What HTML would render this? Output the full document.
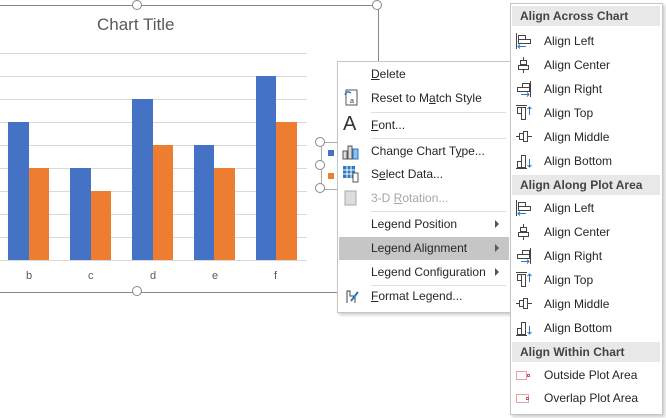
<!DOCTYPE html>
<html><head><style>
body{margin:0;width:666px;height:418px;position:relative;overflow:hidden;background:#fff;font-family:"Liberation Sans",sans-serif;font-size:12px;color:#262626}
.a{position:absolute}
.g{position:absolute;left:0;width:307px;height:1px;background:#d9d9d9}
.b{position:absolute;background:#4472c4}
.o{position:absolute;background:#ed7d31}
.h{position:absolute;width:8px;height:8px;border:1.5px solid #888;border-radius:50%;background:#fff}
.lab{position:absolute;top:270px;color:#595959;font-size:11px}
.mi{position:absolute;left:371px;color:#262626}
.sep{position:absolute;left:371px;width:135px;height:1px;background:#e0e0e0}
.arr{position:absolute;left:495px;width:0;height:0;border-left:4px solid #555;border-top:4px solid transparent;border-bottom:4px solid transparent}
.si{position:absolute;left:544px;color:#262626}
.hd{position:absolute;left:512px;width:148px;height:20px;background:#e8e8e8;font-weight:bold;color:#444;line-height:20px;text-indent:8px}
.ic{position:absolute;left:515px}
</style></head><body>
<div class="a" style="left:0;top:5px;width:378px;height:1px;background:#888"></div>
<div class="a" style="left:378px;top:5px;width:1px;height:56px;background:#888"></div>
<div class="a" style="left:0;top:292px;width:337px;height:1px;background:#888"></div>
<div class="a" style="left:97px;top:15px;font-size:17px;color:#595959">Chart Title</div>
<div class="g" style="top:53px"></div><div class="g" style="top:76px"></div><div class="g" style="top:99px"></div><div class="g" style="top:122px"></div><div class="g" style="top:145px"></div><div class="g" style="top:168px"></div><div class="g" style="top:191px"></div><div class="g" style="top:214px"></div><div class="g" style="top:237px"></div><div class="g" style="top:260px"></div>
<div class="b" style="left:8px;top:122px;width:21px;height:138px"></div><div class="o" style="left:29px;top:168px;width:20px;height:92px"></div>
<div class="b" style="left:70px;top:168px;width:21px;height:92px"></div><div class="o" style="left:91px;top:191px;width:20px;height:69px"></div>
<div class="b" style="left:132px;top:99px;width:21px;height:161px"></div><div class="o" style="left:153px;top:145px;width:20px;height:115px"></div>
<div class="b" style="left:194px;top:145px;width:20px;height:115px"></div><div class="o" style="left:214px;top:168px;width:21px;height:92px"></div>
<div class="b" style="left:256px;top:76px;width:20px;height:184px"></div><div class="o" style="left:276px;top:122px;width:21px;height:138px"></div>
<div class="lab" style="left:26px">b</div><div class="lab" style="left:88px">c</div><div class="lab" style="left:150px">d</div><div class="lab" style="left:212px">e</div><div class="lab" style="left:274px">f</div>
<div class="a" style="left:321px;top:142px;width:16px;height:46px;border:1px solid #aaa;border-right:none"></div>
<div class="a" style="left:328px;top:150px;width:6px;height:6px;background:#4472c4"></div>
<div class="a" style="left:328px;top:173px;width:6px;height:6px;background:#ed7d31"></div>
<div class="h" style="left:132px;top:0px"></div><div class="h" style="left:372px;top:0px"></div><div class="h" style="left:132px;top:286px"></div>
<div class="h" style="left:315px;top:137px"></div><div class="h" style="left:315px;top:160px"></div><div class="h" style="left:315px;top:183px"></div>
<!-- context menu -->
<div class="a" style="left:337px;top:61px;width:172px;height:250px;background:#fff;border:1px solid #c6c6c6;box-shadow:2px 2px 3px rgba(0,0,0,.2)"></div>
<div class="a" style="left:339px;top:237px;width:170px;height:23px;background:#c6c6c6"></div>
<div class="mi" style="top:67px"><u>D</u>elete</div>
<div class="mi" style="top:91px">Reset to M<u>a</u>tch Style</div>
<div class="sep" style="top:112px"></div>
<div class="mi" style="top:118px"><u>F</u>ont...</div>
<div class="sep" style="top:138px"></div>
<div class="mi" style="top:144px">Change Chart T<u>y</u>pe...</div>
<div class="mi" style="top:167px">S<u>e</u>lect Data...</div>
<div class="mi" style="top:191px;color:#a6a6a6">3-D <u>R</u>otation...</div>
<div class="sep" style="top:211px"></div>
<div class="mi" style="top:217px">Legend Position</div><div class="arr" style="top:220px"></div>
<div class="mi" style="top:241px">Legend Alignment</div><div class="arr" style="top:244px"></div>
<div class="mi" style="top:265px">Legend Configuration</div><div class="arr" style="top:268px"></div>
<div class="sep" style="top:285px"></div>
<div class="mi" style="top:289px"><u>F</u>ormat Legend...</div>
<svg class="a" style="left:343px;top:89px" width="16" height="18"><rect x="3" y="1" width="11" height="15" fill="#fff" stroke="#555"/><path d="M2 6 Q4 1 8 4" stroke="#2b79c2" fill="none" stroke-width="1.5"/><text x="7" y="14" font-size="7" fill="#333">a</text></svg>
<div class="a" style="left:343px;top:113px;font-size:20px;color:#333">A</div>
<svg class="a" style="left:342px;top:142px" width="18" height="18"><rect x="1" y="9" width="4" height="8" fill="#ddd" stroke="#555"/><rect x="6" y="4" width="4" height="13" fill="#ddd" stroke="#555"/><rect x="11" y="7" width="5" height="10" fill="#8dc0ea" stroke="#2b79c2"/></svg>
<svg class="a" style="left:342px;top:165px" width="18" height="18"><rect x="1" y="1" width="12" height="12" fill="#2b79c2"/><path d="M1 5H13M1 9H13M5 1V13M9 1V13" stroke="#fff"/><rect x="11" y="8" width="5" height="9" fill="#fff" stroke="#555"/></svg>
<svg class="a" style="left:343px;top:189px" width="16" height="18"><rect x="2" y="2" width="11" height="14" fill="#ddd" stroke="#aaa"/></svg>
<svg class="a" style="left:342px;top:286px" width="18" height="18"><path d="M5 17V5H8V10H13V17" fill="none" stroke="#444"/><path d="M9 15L16 6" stroke="#2b79c2" stroke-width="2"/></svg>
<!-- submenu -->
<div class="a" style="left:510px;top:3px;width:151px;height:410px;background:#fff;border:1px solid #c6c6c6;box-shadow:2px 2px 3px rgba(0,0,0,.2)"></div>
<div class="hd" style="top:6px">Align Across Chart</div>
<div class="hd" style="top:175px">Align Along Plot Area</div>
<div class="hd" style="top:342px">Align Within Chart</div>
<div class="si" style="top:34px">Align Left</div><div class="si" style="top:58px">Align Center</div><div class="si" style="top:82px">Align Right</div><div class="si" style="top:106px">Align Top</div><div class="si" style="top:130px">Align Middle</div><div class="si" style="top:154px">Align Bottom</div>
<div class="si" style="top:201px">Align Left</div><div class="si" style="top:225px">Align Center</div><div class="si" style="top:249px">Align Right</div><div class="si" style="top:273px">Align Top</div><div class="si" style="top:297px">Align Middle</div><div class="si" style="top:321px">Align Bottom</div>
<div class="si" style="top:368px">Outside Plot Area</div><div class="si" style="top:391px">Overlap Plot Area</div>
<svg class="ic" style="top:32px" width="18" height="18"><path d="M1.5 1V17" stroke="#444"/><rect x="3.5" y="3.5" width="7" height="4" fill="none" stroke="#444"/><rect x="3.5" y="7.5" width="12" height="4" fill="none" stroke="#444"/><path d="M3 14.5H11M5 12.5L3 14.5L5 16.5" stroke="#2b79c2" fill="none"/></svg>
<svg class="ic" style="top:56px" width="18" height="18"><path d="M8.5 1V17" stroke="#444"/><rect x="5.5" y="4.5" width="6" height="4" fill="#fff" stroke="#444"/><rect x="3.5" y="9.5" width="10" height="4" fill="#fff" stroke="#444"/></svg>
<svg class="ic" style="top:80px" width="18" height="18"><path d="M15.5 1V17" stroke="#444"/><rect x="7.5" y="3.5" width="7" height="4" fill="none" stroke="#444"/><rect x="2.5" y="7.5" width="12" height="4" fill="none" stroke="#444"/><path d="M6 14.5H14M12 12.5L14 14.5L12 16.5" stroke="#2b79c2" fill="none"/></svg>
<svg class="ic" style="top:104px" width="18" height="18"><path d="M1 1.5H12" stroke="#444"/><rect x="2.5" y="3.5" width="4" height="6" fill="none" stroke="#444"/><rect x="6.5" y="3.5" width="4" height="12" fill="none" stroke="#444"/><path d="M14.5 11V3M12.5 5L14.5 3L16.5 5" stroke="#2b79c2" fill="none"/></svg>
<svg class="ic" style="top:128px" width="18" height="18"><path d="M1 8.5H17" stroke="#444"/><rect x="4.5" y="5.5" width="4" height="6" fill="#fff" stroke="#444"/><rect x="8.5" y="3.5" width="4" height="10" fill="#fff" stroke="#444"/></svg>
<svg class="ic" style="top:152px" width="18" height="18"><path d="M1 16.5H12" stroke="#444"/><rect x="2.5" y="9.5" width="4" height="6" fill="none" stroke="#444"/><rect x="6.5" y="3.5" width="4" height="12" fill="none" stroke="#444"/><path d="M14.5 7V15M12.5 13L14.5 15L16.5 13" stroke="#2b79c2" fill="none"/></svg>
<svg class="ic" style="top:199px" width="18" height="18"><path d="M1.5 1V17" stroke="#444"/><rect x="3.5" y="3.5" width="7" height="4" fill="none" stroke="#444"/><rect x="3.5" y="7.5" width="12" height="4" fill="none" stroke="#444"/><path d="M3 14.5H11M5 12.5L3 14.5L5 16.5" stroke="#2b79c2" fill="none"/></svg>
<svg class="ic" style="top:223px" width="18" height="18"><path d="M8.5 1V17" stroke="#444"/><rect x="5.5" y="4.5" width="6" height="4" fill="#fff" stroke="#444"/><rect x="3.5" y="9.5" width="10" height="4" fill="#fff" stroke="#444"/></svg>
<svg class="ic" style="top:247px" width="18" height="18"><path d="M15.5 1V17" stroke="#444"/><rect x="7.5" y="3.5" width="7" height="4" fill="none" stroke="#444"/><rect x="2.5" y="7.5" width="12" height="4" fill="none" stroke="#444"/><path d="M6 14.5H14M12 12.5L14 14.5L12 16.5" stroke="#2b79c2" fill="none"/></svg>
<svg class="ic" style="top:271px" width="18" height="18"><path d="M1 1.5H12" stroke="#444"/><rect x="2.5" y="3.5" width="4" height="6" fill="none" stroke="#444"/><rect x="6.5" y="3.5" width="4" height="12" fill="none" stroke="#444"/><path d="M14.5 11V3M12.5 5L14.5 3L16.5 5" stroke="#2b79c2" fill="none"/></svg>
<svg class="ic" style="top:295px" width="18" height="18"><path d="M1 8.5H17" stroke="#444"/><rect x="4.5" y="5.5" width="4" height="6" fill="#fff" stroke="#444"/><rect x="8.5" y="3.5" width="4" height="10" fill="#fff" stroke="#444"/></svg>
<svg class="ic" style="top:319px" width="18" height="18"><path d="M1 16.5H12" stroke="#444"/><rect x="2.5" y="9.5" width="4" height="6" fill="none" stroke="#444"/><rect x="6.5" y="3.5" width="4" height="12" fill="none" stroke="#444"/><path d="M14.5 7V15M12.5 13L14.5 15L16.5 13" stroke="#2b79c2" fill="none"/></svg>
<svg class="ic" style="top:367px" width="18" height="18"><rect x="1.5" y="4.5" width="10" height="8" fill="none" stroke="#e8a0a8"/><rect x="12.5" y="7.5" width="2" height="2" fill="none" stroke="#d05060"/></svg>
<svg class="ic" style="top:390px" width="18" height="18"><rect x="1.5" y="4.5" width="12" height="8" fill="none" stroke="#e8a0a8"/><rect x="11.5" y="7.5" width="2" height="2" fill="none" stroke="#d05060"/></svg>
</body></html>
